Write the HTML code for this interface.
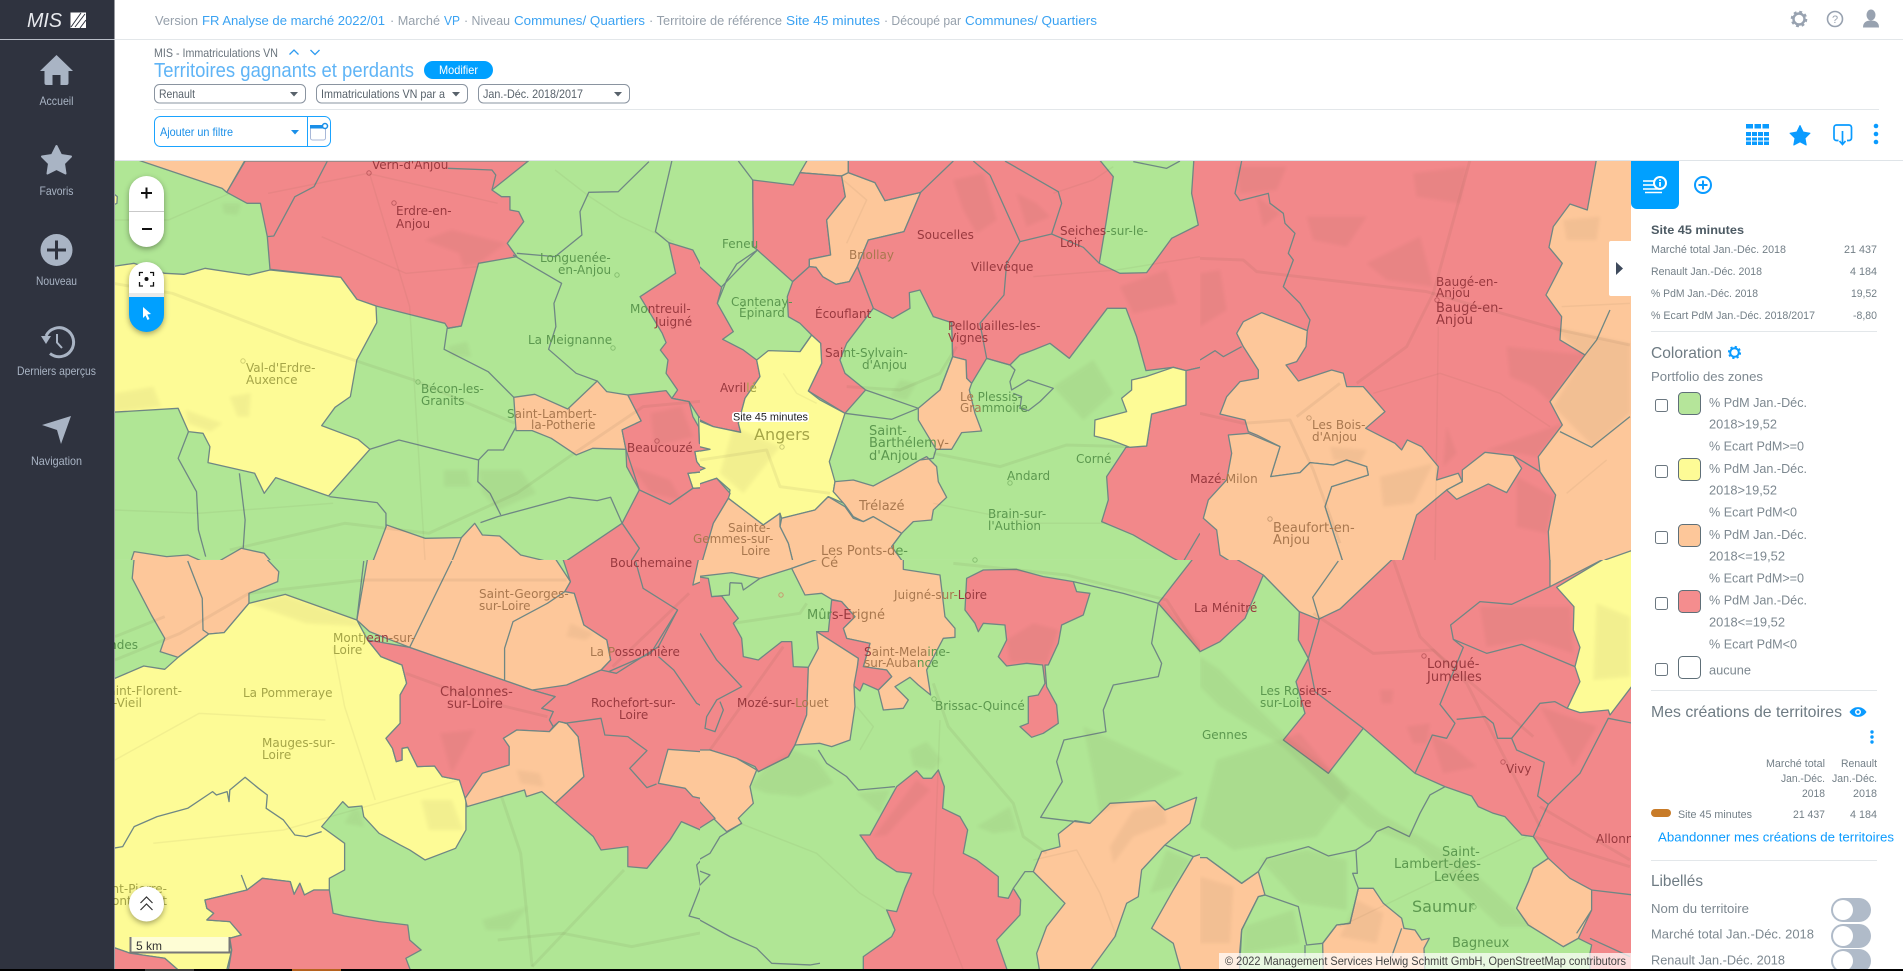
<!DOCTYPE html>
<html lang="fr"><head><meta charset="utf-8"><title>Territoires gagnants et perdants</title>
<style>
html,body{margin:0;padding:0;background:#fff;width:1903px;height:971px;overflow:hidden}
svg{display:block}
text{font-family:"Liberation Sans",sans-serif}
.m polygon,.m polyline{vector-effect:non-scaling-stroke;stroke-linejoin:round}
.r,.o,.y,.g,.l{stroke:#6f8784;stroke-width:1.3}
.r{fill:#f2888a}.o{fill:#fdc79a}.y{fill:#fdfb96}.g{fill:#b0e695}.l{fill:none}
.p{fill:#5a4a30;opacity:.06;stroke:none;filter:blur(5px)}
.w{fill:none;stroke:#5a4a30;opacity:.06;stroke-width:1.500}
.W{fill:none;stroke:#5a4a30;opacity:.07;stroke-width:3}
.lb text{font-family:"DejaVu Sans",sans-serif;font-size:12px}
.lb .b{font-size:13px}
.lr{fill:#99393f}.lg{fill:#5c984f}.lo{fill:#a9784f}.ly{fill:#a5a548}
.gy{fill:#96a0ab}.bl{fill:#3aa2f2}
.sn{fill:#a9b4c4;font-size:12px;text-anchor:middle}
.pt{fill:#737f87;font-size:11px}
.ph{fill:#6e7b83;font-size:16px}
.pl{fill:#7d8890;font-size:13px}
</style></head><body>
<svg xmlns="http://www.w3.org/2000/svg" width="1903" height="971" viewBox="0 0 1903 971">
<defs>
<clipPath id="ca"><rect x="115" y="161" width="585" height="399"/></clipPath>
<clipPath id="cb"><rect x="700" y="161" width="500" height="399"/></clipPath>
<clipPath id="cc"><rect x="115" y="560" width="585" height="409"/></clipPath>
<clipPath id="cd"><rect x="700" y="560" width="500" height="409"/></clipPath>
<clipPath id="ce"><rect x="1200" y="161" width="431" height="399"/></clipPath>
<clipPath id="cf"><rect x="1200" y="560" width="431" height="409"/></clipPath>
</defs>
<rect width="1903" height="971" fill="#fff"/>

<!-- MAP -->
<g class="m">
<!-- Tile A -->
<g clip-path="url(#ca)"><g transform="translate(115 160) scale(.3827 .3333)">
<rect class="g" style="stroke:none" width="1600" height="1200"/>
<polygon class="o" points="60,0 340,0 292,97 280,85"/>
<polygon class="r" points="340,3 292,97 345,130 380,130 398,230 405,328 590,352 632,418 682,438 862,490 870,505 905,498 950,310 1050,290 1025,250 1068,185 1055,155 1032,150 1032,110 1010,110 985,90 1080,3"/>
<polygon class="y" points="-10,320 50,310 130,340 180,343 235,325 350,345 405,330 590,352 632,418 682,438 684,488 632,600 615,710 575,742 540,797 635,838 666,868 558,1008 420,953 390,1000 365,940 243,908 248,860 230,820 192,815 165,745 -10,757"/>
<polygon class="o" points="1042,712 1097,703 1183,747 1260,663 1285,695 1340,705 1375,783 1325,810 1335,868 1248,865 1205,885 1140,835 1090,812 1048,812"/>
<polygon class="r" points="1447,248 1510,270 1535,325 1600,375 1600,830 1525,770 1500,725 1455,715 1470,690 1440,640 1445,600 1425,570 1440,548 1430,520 1372,410 1465,340"/>
<polygon class="y" points="1525,770 1600,820 1600,980 1510,985 1497,940 1540,935 1520,905 1515,875 1553,868 1527,850"/>
<polygon class="r" points="1340,705 1440,692 1455,715 1500,725 1510,770 1525,800 1527,850 1553,868 1515,875 1520,905 1540,935 1497,940 1510,985 1450,1033 1370,990 1337,920 1335,868 1325,810 1375,783"/>
<polygon class="r" points="1325,1090 1370,990 1450,1033 1510,985 1600,980 1600,1210 1345,1210 1370,1165"/>
<polygon class="r" points="1170,1210 1325,1090 1370,1165 1345,1210"/>
<polygon class="o" points="672,1210 710,1095 810,1135 905,1133 940,1090 960,1125 1005,1128 1060,1185 1150,1210"/>
<polygon class="o" points="50,1175 135,1190 190,1185 240,1210 40,1210"/>
<polygon class="o" points="262,1210 330,1165 390,1180 412,1210"/>
<polygon class="y" points="-5,100 6,110 5,130 -5,135"/>
<polyline class="l" points="905,1133 878,1210"/>
<polyline class="l" points="555,3 520,80 470,110 415,228 398,230"/>
<polyline class="l" points="870,25 985,30 995,45 985,90"/>
<polyline class="l" points="1040,285 1167,370 1147,430 1152,500 1133,568 1205,640 1260,663"/>
<polyline class="l" points="905,498 868,505 860,568 975,635 1042,712"/>
<polyline class="l" points="1050,280 1150,290 1220,225 1215,155 1238,97 1315,95 1395,5"/>
<polyline class="l" points="1455,3 1412,215 1447,248"/>
<polyline class="l" points="1048,800 1015,870 975,870 950,900 742,840 666,868"/>
<polyline class="l" points="950,900 948,965 980,1000 1008,1065"/>
<polyline class="l" points="560,1010 685,1028 708,1060 708,1100"/>
<polyline class="l" points="1325,1090 1295,1012 1260,1022 1187,1012 1000,1070 955,1088"/>
<polyline class="l" points="1335,868 1370,990"/>
<polyline class="l" points="192,815 165,895 213,995 218,1110 237,1190"/>
<polyline class="l" points="325,940 340,1080 335,1165"/>
<polyline class="W" points="-5,370 150,400 480,545 780,660 1045,790"/>
<polyline class="w" points="665,40 770,440 810,1200"/>
<polyline class="w" points="1150,30 1240,110 1320,170 1460,245"/>
<polyline class="W" points="1568,720 1380,740 1200,880 1050,1000 820,1120 600,1090 300,1170"/>
<polyline class="w" points="400,100 660,40 1000,130"/>
<polyline class="w" points="540,230 760,340 950,320"/>
<polyline class="w" points="0,180 140,180 300,100"/>
<polyline class="w" points="0,1050 220,1060 570,1030"/>
<polygon class="p" points="810,240 880,210 1020,250 950,310 910,320 900,280"/>
<polygon class="p" points="950,930 1060,930 1100,1000 1000,1050 960,1000"/>
<polygon class="p" points="185,750 280,790 250,815 190,790"/>
<polygon class="p" points="300,710 355,700 350,770 320,770"/>
<polygon class="p" points="0,700 100,680 120,740 0,757"/>
<polygon class="p" points="280,130 330,130 320,165 285,160"/>
<polygon class="p" points="870,560 920,545 930,590 880,590"/>
<polygon class="p" points="1400,760 1480,740 1510,830 1410,860"/>
<polygon class="p" points="1350,920 1450,960 1480,1020 1400,1000"/>
<polygon class="p" points="860,930 920,930 930,980 860,980"/>
</g></g>
<!-- Tile B -->
<g clip-path="url(#cb)"><g transform="translate(700 160)  scale(.3333)">
<rect class="g" style="stroke:none" width="1510" height="1200"/>
<polygon class="r" points="-10,312 65,382 52,430 100,515 68,538 130,570 170,600 180,650 135,715 115,790 122,817 40,800 -10,775"/>
<polygon class="o" points="325,-5 300,38 425,48 445,38 445,-5"/>
<polygon class="r" points="158,60 280,75 300,38 425,48 436,110 380,180 392,285 328,298 328,320 278,365 172,270 160,260"/>
<polygon class="o" points="425,48 445,38 525,68 555,122 662,97 612,215 505,240 472,320 448,365 408,373 368,350 348,322 328,320 328,298 392,285 380,180 436,110"/>
<polygon class="r" points="445,-5 1195,-5 1240,50 1218,190 1198,310 1260,340 1340,338 1415,235 1495,195 1475,100 1482,-5 1510,-5 1510,620 1458,632 1420,622 1338,632 1310,530 1278,445 1222,445 1108,595 1050,550 1000,570 960,585 930,615 860,595 815,670 800,655 798,600 758,590 755,488 700,470 660,390 628,398 630,445 578,475 520,445 472,320 505,240 612,215 662,97 555,122 525,68 445,38"/>
<polygon class="r" points="1510,620 1458,632 1458,735 1355,762 1340,858 1278,862 1220,950 1225,1020 1205,1085 1300,1125 1420,1195 1450,1210 1510,1210"/>
<polyline class="l" points="1450,1205 1500,1120"/>
<polygon class="y" points="1295,660 1338,650 1420,622 1458,632 1458,735 1355,762 1340,858 1290,862 1232,840 1183,828 1185,780 1280,755 1265,715 1295,690"/>
<polygon class="r" points="278,365 328,320 348,322 368,350 408,373 448,365 472,320 520,445 440,550 420,600 435,640 497,690 435,760 325,693 365,610 362,550 335,525 300,490 265,470 262,410"/>
<polygon class="y" points="335,525 362,550 365,610 325,693 360,720 435,760 388,905 405,965 400,995 432,1030 385,1010 345,1050 245,1075 240,1060 190,1095 85,1015 90,990 50,955 20,965 -10,975 -10,780 40,800 122,817 115,790 135,715 180,650 170,600 205,572 300,575"/>
<polygon class="r" points="-10,858 30,868 -10,875"/>
<polygon class="r" points="-10,915 15,925 -10,935"/>
<polygon class="r" points="-10,975 50,955 90,1000 85,1015 40,1090 10,1210 -10,1210"/>
<polygon class="o" points="758,590 798,600 800,655 815,670 808,690 825,760 845,813 785,818 755,868 708,868 655,780 655,745 720,690"/>
<polygon class="o" points="400,995 405,965 460,960 520,978 600,935 660,900 680,890 710,920 715,965 740,1012 700,1050 695,1080 640,1085 605,1120 520,1070 490,1085 460,1070 435,1035"/>
<polygon class="o" points="240,1100 245,1075 345,1050 385,1010 435,1040 460,1075 490,1085 520,1070 605,1120 575,1160 612,1210 280,1210 265,1150"/>
<polygon class="o" points="85,1015 190,1095 240,1060 240,1100 265,1150 280,1210 5,1210 40,1090"/>
<polyline class="l" points="115,3 158,60 160,260 172,270 65,380"/>
<polyline class="l" points="172,270 110,312 80,360 52,430"/>
<polyline class="l" points="335,525 300,575"/>
<polyline class="l" points="435,760 575,778 655,745"/>
<polyline class="l" points="720,690 758,590 755,488"/>
<polyline class="l" points="497,690 655,745"/>
<polyline class="l" points="870,45 960,245 1055,222 1085,130 1075,95 915,3"/>
<polyline class="l" points="820,3 870,45"/>
<polyline class="l" points="760,3 662,97"/>
<polyline class="l" points="960,245 920,310 912,405 840,490 860,595"/>
<polyline class="l" points="1055,222 1150,262 1198,310"/>
<polyline class="l" points="860,595 930,615 945,630 930,665 935,690 985,660 1060,685 1020,725 985,752 960,745 965,710 940,700"/>
<polyline class="l" points="1300,5 1400,25 1440,3"/>
<polyline class="l" points="708,868 700,895 660,900"/>
<polyline class="l" points="605,1120 575,1160"/>
<polyline class="W" points="700,880 900,920 1100,855 1280,860"/>
<polyline class="W" points="440,680 600,690 720,640 770,560"/>
<polyline class="W" points="0,900 200,870 240,980 390,1000"/>
<polyline class="w" points="250,640 290,700 350,730"/>
<polyline class="w" points="1060,100 1180,60 1240,20"/>
<polyline class="w" points="1000,350 1250,330 1500,290"/>
<polyline class="w" points="700,1030 1000,1090 1220,1090"/>
<polyline class="w" points="440,250 500,120 430,60"/>
<polygon class="p" points="760,60 850,40 890,180 830,220 790,150"/>
<polygon class="p" points="1060,680 1180,600 1240,700 1150,780"/>
<polygon class="p" points="950,100 1010,130 1050,170 980,200"/>
<polygon class="p" points="1260,380 1400,330 1430,430 1300,460"/>
<polygon class="p" points="100,800 240,860 130,1000 60,940"/>
<polygon class="p" points="600,660 650,670 620,720 570,710"/>
</g></g>
<!-- Tile C -->
<g clip-path="url(#cc)"><g transform="translate(115 560) scale(.3827 .3333)">
<rect class="g" style="stroke:none" width="1600" height="1240"/>
<polygon class="r" points="1170,-5 1190,65 1175,95 1200,100 1225,195 1285,240 1295,300 1270,330 1090,390 1120,400 1150,410 1115,445 1145,455 1135,480 1145,500 1160,485 1180,490 1210,530 1225,650 1150,730 1250,830 1270,870 1340,860 1340,920 1390,925 1450,840 1480,785 1530,810 1600,760 1600,-5"/>
<polygon class="o" points="1420,670 1445,568 1530,575 1600,565 1600,770 1550,720 1510,710 1490,685"/>
<polygon class="o" points="1510,75 1600,35 1600,-5 1525,-5"/>
<polygon class="o" points="50,-5 45,55 95,165 130,235 118,275 165,292 245,222 285,218 350,130 350,100 425,65 428,35 395,-5"/>
<polygon class="y" points="-10,360 75,318 130,328 165,292 245,222 285,218 350,130 445,103 632,180 660,240 695,290 750,315 762,370 745,405 745,490 708,535 725,565 735,605 750,600 750,565 765,562 790,620 835,618 855,650 900,660 917,715 917,810 890,865 810,900 770,870 745,855 690,820 650,770 645,738 610,742 595,725 540,800 600,850 600,930 560,955 560,990 520,990 495,1005 483,970 468,1003 458,965 385,955 345,990 235,1020 240,1045 258,1060 240,1080 300,1085 330,1125 300,1135 305,1170 290,1240 175,1240 130,1195 40,1180 -10,1160"/>
<polygon class="r" points="660,240 770,262 1090,390 1120,400 1150,410 1115,445 1145,455 1135,480 1145,500 1135,515 1050,510 1015,535 1030,560 1030,615 960,640 915,715 900,660 855,650 835,618 790,620 765,562 750,565 750,600 735,605 725,565 708,535 745,490 745,405 762,370 750,315 695,290"/>
<polygon class="o" points="660,-5 632,180 665,215 770,262 1090,390 1180,375 1270,330 1295,300 1285,240 1225,195 1200,100 1175,95 1190,65 1150,-5"/>
<polygon class="o" points="1015,535 1050,510 1135,515 1160,485 1180,490 1210,530 1225,650 1150,730 1115,695 1075,710 1070,690 1010,710 920,740 915,715 960,640 1030,615 1030,560"/>
<polygon class="r" points="235,1020 345,990 385,955 458,965 468,1003 483,970 495,1005 520,990 560,990 570,1060 600,1068 690,1085 765,1095 770,1140 800,1170 760,1195 775,1240 295,1240 305,1170 300,1135 330,1125 300,1085 240,1080 258,1060 240,1045"/>
<polygon class="r" points="-10,1160 40,1180 130,1195 175,1240 -10,1240"/>
<polyline class="l" points="190,3 228,115 230,210 245,222"/>
<polyline class="l" points="880,3 770,262"/>
<polyline class="l" points="1175,95 1130,130 1040,185 1018,265 1018,360"/>
<polyline class="l" points="1360,3 1380,85 1470,150 1420,260 1310,340 1270,330"/>
<polyline class="l" points="1470,150 1400,280 1290,335"/>
<polyline class="l" points="1420,290 1460,330 1520,430 1600,480"/>
<polyline class="l" points="1175,490 1270,475 1280,525 1340,530 1390,572 1345,625 1390,683 1415,672"/>
<polyline class="l" points="1600,815 1520,915 1530,980 1500,1068 1600,1100"/>
<polyline class="l" points="-5,865 20,860 50,800 110,770 190,745 255,695 265,705 293,695 298,725 300,690 340,652 375,685 398,705 395,745 440,780 470,825 500,830 540,815"/>
<polyline class="l" points="330,945 345,990"/>
<polyline class="l" points="650,3 632,180"/>
<polyline class="W" points="0,300 170,220 350,100 650,60 1180,60"/>
<polyline class="W" points="0,230 130,170"/>
<polyline class="W" points="760,340 950,420 1130,470"/>
<polyline class="W" points="1300,320 1500,100"/>
<polyline class="W" points="1000,1140 1170,1120 1350,1160 1568,1110"/>
<polyline class="W" points="1010,710 1060,880 1090,1220"/>
<polyline class="W" points="1090,1220 1330,930"/>
<polyline class="w" points="570,260 600,440 680,720"/>
<polyline class="w" points="100,850 440,810 900,660"/>
<polyline class="w" points="0,600 220,460 550,480"/>
<polygon class="p" points="350,130 445,105 620,175 650,200 500,190 400,150"/>
<polygon class="p" points="850,520 940,510 880,640"/>
<polygon class="p" points="1190,190 1250,220 1230,240 1180,230"/>
<polygon class="p" points="960,1080 1080,1040 1030,1110 970,1110"/>
<polygon class="p" points="800,720 880,720 910,810 820,810"/>
<polygon class="p" points="620,750 640,750 650,800 600,790"/>
<polygon class="p" points="1050,630 1110,640 1120,680 1060,670"/>
</g></g>
<!-- Tile D -->
<g clip-path="url(#cd)"><g transform="translate(700 560) scale(.3333)">
<rect class="g" style="stroke:none" width="1510" height="1240"/>
<polygon class="o" points="-10,50 95,38 180,55 275,25 360,-5 -10,-5"/>
<polygon class="r" points="-10,50 25,55 35,110 65,108 115,175 100,190 125,235 130,290 175,300 200,280 245,245 275,245 280,320 325,322 320,465 285,555 265,590 175,635 165,620 110,595 30,570 -10,575"/>
<polygon class="o" points="275,25 360,-5 610,-5 610,28 720,45 735,170 765,205 765,232 730,235 680,330 692,405 655,375 630,352 585,380 625,420 610,445 550,450 535,390 575,350 560,330 490,320 510,250 440,235 430,205 465,170 425,125 395,118 365,100 315,105"/>
<polygon class="r" points="395,120 425,125 465,170 430,205 440,235 510,250 490,320 560,330 575,350 535,390 490,370 480,393 458,375 472,320 475,295 350,215 385,215"/>
<polygon class="o" points="350,215 475,295 472,320 462,375 465,440 450,540 395,560 360,550 285,555 320,465 325,322 355,265"/>
<polygon class="r" points="800,55 850,30 950,28 1030,50 1120,65 1130,95 1170,100 1150,165 1085,195 1075,250 1045,315 1035,315 1040,380 1070,435 1075,490 1030,520 995,532 960,500 985,490 985,410 1015,405 1035,370 1028,315 980,310 920,318 895,290 920,240 915,195 850,190 835,215 825,190 795,150"/>
<polygon class="o" points="-10,570 30,570 110,595 170,630 150,680 160,730 115,775 125,790 80,815 45,780 -10,715"/>
<polygon class="r" points="-10,715 45,775 -10,810"/>
<polygon class="r" points="480,825 510,825 590,680 650,632 670,655 695,655 715,630 733,680 728,745 780,770 803,810 790,880 830,900 895,950 895,1010 925,1015 940,985 962,1020 960,1065 890,1140 925,1240 490,1240 490,1190 575,1130 585,1110 560,1050 590,1055 615,985 635,940 590,935 530,895"/>
<polygon class="r" points="1375,130 1480,-5 1510,-5 1510,285"/>
<polygon class="o" points="1125,782 1170,790 1230,730 1365,722 1395,750 1490,712 1470,790 1395,855 1325,930 1315,1010 1280,1030 1245,1130 1165,1240 1020,1240 1010,1180 1040,1100 1095,1030 1000,935 1025,875 1080,860 1075,822"/>
<polygon class="o" points="1510,880 1480,890 1420,990 1355,1105 1420,1150 1445,1240 1510,1240"/>
<polygon class="g" points="-10,930 30,945 -10,985"/>
<polyline class="l" points="90,68 125,70 130,90 180,55"/>
<polyline class="l" points="90,68 88,105 35,110"/>
<polyline class="l" points="355,570 380,610 440,650 475,690 585,680"/>
<polyline class="l" points="-10,1075 90,1130 170,1165 215,1210 330,1215 360,1210"/>
<polyline class="l" points="1120,65 1270,100 1375,130 1355,250 1385,310 1375,350 1240,375 1210,450 1218,515 1092,540 1070,605 1087,665 1022,772 1170,790"/>
<polyline class="l" points="1000,935 975,935 940,985"/>
<polyline class="l" points="1395,855 1480,890"/>
<polyline class="l" points="125,790 60,830 30,880 -5,900"/>
<polyline class="l" points="0,220 50,300 125,380 50,420 20,470 15,505 45,515 70,450 60,425"/>
<polyline class="l" points="175,635 265,590 285,555"/>
<polyline class="W" points="700,370 745,500 940,730 970,830 1040,880"/>
<polyline class="W" points="30,570 250,260"/>
<polyline class="W" points="760,10 1100,45 1400,120 1510,290"/>
<polyline class="W" points="100,190 300,160 320,130"/>
<polyline class="w" points="720,480 700,1000 790,1230"/>
<polyline class="w" points="120,790 350,880 480,1000 560,1050"/>
<polyline class="w" points="1000,900 1130,870 1200,1000 1250,1130"/>
<polyline class="w" points="470,440 520,500 480,570"/>
<polygon class="p" points="150,680 200,620 280,570 350,600 400,670 300,710 200,700"/>
<polygon class="p" points="630,570 680,545 725,600 700,630 640,620"/>
<polygon class="p" points="1150,500 1450,640 1200,760 1180,650"/>
<polygon class="p" points="920,240 1000,190 1075,210 1040,310 930,305"/>
<polygon class="p" points="520,830 590,740 650,660 690,690 610,770 560,825"/>
<polygon class="p" points="1385,125 1510,260 1510,285 1375,135"/>
<polygon class="p" points="1300,750 1390,730 1400,790 1300,830 1240,910 1230,860"/>
<polygon class="p" points="1400,870 1470,900 1420,980 1350,1000"/>
<polygon class="p" points="470,700 570,690 540,760"/>
<polygon class="p" points="830,800 930,740 950,810 880,820"/>
</g></g>
<!-- Tile E -->
<g clip-path="url(#ce)"><g transform="translate(1200 160) scale(.3333)">
<rect class="r" style="stroke:none" width="1310" height="1210"/>
<polygon class="o" points="1190,-5 1162,150 1110,132 1060,200 1047,262 1087,310 1038,405 1085,470 1080,540 1155,585 1050,725 1087,795 1015,890 1020,935 1067,1005 1045,1115 1050,1210 1310,1210 1310,-5"/>
<polygon class="o" points="185,458 322,512 318,560 290,605 258,615 295,663 395,630 430,640 440,680 490,680 555,755 497,805 585,850 605,870 622,840 665,860 715,920 710,960 775,940 787,965 740,990 650,1065 605,1210 430,1210 375,1040 395,980 505,945 500,920 440,900 400,915 330,908 300,938 212,950 240,860 170,825 145,815 135,780 60,762 80,710 120,665 175,655 175,630 130,560 110,520 130,485"/>
<polygon class="o" points="85,825 145,820 240,860 212,950 300,938 330,908 400,915 440,900 500,920 505,945 395,980 375,1040 430,1210 100,1210 60,1185 50,1110 10,1075 25,1020 80,960 95,880"/>
<polygon class="o" points="787,930 855,877 940,887 965,925 920,998 865,972 770,1018 740,990 787,965"/>
<polygon class="y" points="1215,1200 1300,1170 1300,1210 1215,1210"/>
<polyline class="l" points="125,3 105,100 120,122 205,100 210,130 250,160 255,190 285,220 265,280 280,300 250,380 300,430 330,480 322,512"/>
<polyline class="l" points="0,600 45,572 70,590 125,560"/>
<polyline class="l" points="1020,935 940,887"/>
<polyline class="l" points="1290,770 1175,862 1080,815"/>
<polyline class="l" points="1155,585 1190,540 1230,450"/>
<polyline class="W" points="0,295 130,300 170,335 680,395 1080,510 1290,555"/>
<polyline class="w" points="715,500 705,1200"/>
<polyline class="W" points="810,0 700,400"/>
<polyline class="W" points="700,400 620,560 470,670"/>
<polyline class="W" points="0,760 130,790 270,780 340,930 420,1150"/>
<polyline class="W" points="290,770 420,670"/>
<polyline class="w" points="1085,440 1290,430"/>
<polyline class="w" points="520,700 720,640 900,700 1050,800"/>
<polyline class="w" points="1220,900 1100,1000"/>
<polygon class="p" points="320,170 500,170 440,260 340,240"/>
<polygon class="p" points="640,40 800,20 780,130 650,110"/>
<polygon class="p" points="500,310 660,230 700,380 560,360"/>
<polygon class="p" points="920,560 1150,585 1050,725 1000,680 930,650"/>
<polygon class="p" points="860,870 1090,790 1010,890 950,880"/>
<polygon class="p" points="740,800 770,880 730,920"/>
<polygon class="p" points="110,20 260,20 230,90 120,100"/>
<polygon class="p" points="0,340 60,330 80,450 0,500"/>
<polygon class="p" points="170,110 240,160 190,200"/>
<polygon class="p" points="1060,500 1290,550 1290,760 1180,860 1060,740 1150,590"/>
<polygon class="p" points="1090,180 1200,170 1190,240 1100,240"/>
<polygon class="p" points="390,860 500,870 480,910 400,900"/>
<polygon class="p" points="540,950 700,910 640,1030 550,1040"/>
<polygon class="p" points="950,950 1060,1010 1040,1120 950,1100"/>
</g></g>
<!-- Tile F -->
<g clip-path="url(#cf)"><g transform="translate(1200 560) scale(.3333)">
<rect class="r" style="stroke:none" width="1310" height="1240"/>
<polygon class="g" points="-10,280 60,245 135,175 190,45 298,155 295,240 325,295 288,365 315,460 250,540 385,640 490,505 645,640 735,680 815,708 835,740 880,760 915,770 965,825 1000,830 1045,895 1000,925 985,965 950,1045 985,1095 1090,1160 1135,1135 1175,1155 1170,1180 1170,1240 -10,1240"/>
<polygon class="o" points="-10,893 20,893 125,970 175,935 195,1005 175,1010 125,1110 118,1240 -10,1240"/>
<polygon class="o" points="368,1150 410,1095 450,1090 475,985 520,985 550,1030 605,1075 612,1105 645,1110 665,1140 688,1135 672,1165 675,1240 370,1240"/>
<polygon class="o" points="1045,895 1000,925 985,965 950,1045 985,1095 1090,1160 1135,1135 1175,1050 1175,990 1110,955"/>
<polygon class="o" points="105,-5 190,45 298,155 355,178 420,147 580,-5"/>
<polygon class="o" points="1050,-5 1050,80 1215,-5"/>
<polygon class="y" points="1070,82 1215,-5 1310,-5 1310,360 1230,465 1225,450 1140,458 1102,445 1140,365 1125,320 1140,262 1120,210 1122,140"/>
<polyline class="l" points="415,3 338,112 358,178"/>
<polyline class="l" points="1050,80 935,133 840,125 752,195 760,238 860,280 965,253 1125,320"/>
<polyline class="l" points="760,238 790,262 720,433 765,490 740,535 697,525 645,640"/>
<polyline class="l" points="770,478 855,470 880,490 893,535 935,535 1020,430 1065,425 1102,445"/>
<polyline class="l" points="935,535 950,570 1033,607 1013,708 1045,733 1140,640 1225,475 1300,490"/>
<polyline class="l" points="1045,733 1000,830"/>
<polyline class="l" points="1175,990 1300,1005"/>
<polyline class="l" points="358,178 325,295 345,395 490,505"/>
<polyline class="l" points="735,680 690,705 660,760 628,830 565,800 530,815 510,843 468,870 385,888 325,860 200,895 175,935 125,970 20,893"/>
<polyline class="l" points="468,870 472,940 458,940 475,985 450,1090 410,1095 368,1150 320,1155 295,1040 195,1005"/>
<polyline class="l" points="195,1005 175,1010 125,1110 118,1190"/>
<polyline class="l" points="315,1155 315,1190"/>
<polyline class="l" points="605,1105 575,1190"/>
<polyline class="l" points="1170,1135 1290,1190"/>
<polyline class="l" points="1175,1050 1130,1120"/>
<polygon class="p" points="0,290 60,330 250,520 400,640 540,760 780,900 1000,1100 900,1100 650,860 500,800 250,560 60,440 0,380"/>
<polygon class="p" points="50,600 300,520 450,700 350,830 100,870 0,800"/>
<polygon class="p" points="180,900 320,870 440,900 440,1050 300,1030"/>
<polygon class="p" points="130,1100 280,1050 300,1150 130,1180"/>
<polygon class="p" points="0,950 100,980 90,1150 0,1150"/>
<polygon class="p" points="470,1020 550,1060 530,1150 420,1130"/>
<polygon class="p" points="690,520 760,560 830,620 730,640"/>
<polygon class="p" points="1020,440 1190,500 1120,620 1100,580"/>
<polygon class="p" points="840,140 1110,140 1120,280 1000,240 860,260"/>
<polygon class="p" points="620,500 690,490 680,550 640,550"/>
<polygon class="p" points="1190,130 1290,170 1290,350 1180,360"/>
<polygon class="p" points="540,390 580,390 575,430 545,430"/>
<polyline class="W" points="580,0 660,230 800,370 1020,800"/>
<polyline class="W" points="340,160 520,280 700,270 1000,530"/>
<polyline class="W" points="1020,740 1290,900"/>
<polyline class="W" points="1000,830 1290,920"/>
<polyline class="w" points="420,1100 980,830"/>
</g></g>
<!-- Town dots -->
<g fill="none" stroke-width="1">
<circle cx="369" cy="173" r="2.2" stroke="#c05c60"/><circle cx="394" cy="203" r="2.2" stroke="#c05c60"/>
<circle cx="617" cy="275" r="2.2" stroke="#86bf70"/><circle cx="613" cy="348" r="2.2" stroke="#86bf70"/>
<circle cx="243" cy="361" r="2.2" stroke="#d0cf70"/><circle cx="418" cy="382" r="2.2" stroke="#86bf70"/>
<circle cx="657" cy="441" r="2.2" stroke="#c05c60"/><circle cx="782" cy="447" r="2.2" stroke="#c8c870"/>
<circle cx="1437" cy="300" r="2.2" stroke="#c05c60"/><circle cx="1309" cy="418" r="2.2" stroke="#c89a70"/>
<circle cx="1270" cy="519" r="2.2" stroke="#c89a70"/><circle cx="1424" cy="656" r="2.2" stroke="#c05c60"/>
<circle cx="1503" cy="762" r="2.2" stroke="#c05c60"/><circle cx="1474" cy="907" r="2.2" stroke="#86bf70"/>
<circle cx="934" cy="699" r="2.2" stroke="#86bf70"/><circle cx="781" cy="595" r="2.2" stroke="#c89a70"/>
<circle cx="975" cy="560" r="2.2" stroke="#86bf70"/><circle cx="1010" cy="483" r="2.2" stroke="#86bf70"/>
</g>
<!-- Map labels -->
<g class="lb">
<text class="lr" x="372" y="169">Vern-d'Anjou</text>
<text class="lr" x="396" y="215">Erdre-en-</text><text class="lr" x="396" y="228">Anjou</text>
<text class="lg" x="540" y="262">Longuenée-</text><text class="lg" x="558" y="274">en-Anjou</text>
<text class="lr" x="630" y="313"><tspan class="lg">Mo</tspan>ntreuil-</text><text class="lr" x="655" y="326">Juigné</text>
<text class="lg" x="528" y="344">La Meignanne</text>
<text class="ly" x="246" y="372">Val-d'Erdre-</text><text class="ly" x="246" y="384">Auxence</text>
<text class="lg" x="421" y="393">Bécon-les-</text><text class="lg" x="421" y="405">Granits</text>
<text class="lo" x="507" y="418"><tspan class="lg">S</tspan>aint-Lambert-</text><text class="lo" x="531" y="429">la-Potherie</text>
<text class="lr" x="627" y="452">Beaucouzé</text>
<text class="lg" x="722" y="248">Feneu</text>
<text class="lo" x="849" y="259">Briollay</text>
<text class="lr" x="917" y="239">Soucelles</text>
<text class="lr" x="971" y="271">Villevêque</text>
<text class="lr" x="1060" y="235">Seiches<tspan class="lg">-sur-le-</tspan></text><text class="lr" x="1060" y="247">Loir</text>
<text class="lg" x="731" y="306">Cantenay-</text><text class="lg" x="739" y="317">Épinard</text>
<text class="lr" x="815" y="318">Écouflant</text>
<text class="lr" x="948" y="330">Pellouailles-les-</text><text class="lr" x="948" y="342">Vignes</text>
<text class="lg" x="825" y="357"><tspan class="lr">Sai</tspan>nt-Sylvain-</text><text class="lg" x="862" y="369">d'Anjou</text>
<text class="lr" x="720" y="392">Avril<tspan class="ly">lé</tspan></text>
<text class="lg" x="960" y="401"><tspan class="lo">Le </tspan>Plessis-</text><text class="lg" x="960" y="412"><tspan class="lo">Gra</tspan>mmoire</text>
<text class="ly" x="754" y="440" style="font-size:16px">Angers</text>
<text class="lg b" x="869" y="435">Saint-</text><text class="lg b" x="869" y="447">Barthélem<tspan class="lo">y-</tspan></text><text class="lg b" x="869" y="460">d'Anjou</text>
<text class="lg" x="1076" y="463">Corné</text>
<text class="lg" x="1007" y="480">Andard</text>
<text class="lo b" x="859" y="510">Trélazé</text>
<text class="lg" x="988" y="518">Brain-sur-</text><text class="lg" x="988" y="530">l'Authion</text>
<text class="lo" x="728" y="532">Sainte-</text><text class="lo" x="693" y="543">Gemmes-sur-</text><text class="lo" x="741" y="555">Loire</text>
<text class="lo b" x="821" y="555">Les Ponts-d<tspan class="lg">e-</tspan></text><text class="lo b" x="821" y="567">Cé</text>
<text class="lo" x="894" y="599">Juigné-sur-<tspan class="lr">Loire</tspan></text>
<text class="lg b" x="807" y="619">Mûr<tspan class="lr">s-E</tspan><tspan class="lo">rigné</tspan></text>
<text class="lo" x="864" y="656"><tspan class="lr">S</tspan>aint-Mela<tspan class="lg">ine-</tspan></text><text class="lo" x="864" y="667">sur-Auba<tspan class="lg">nce</tspan></text>
<text class="lr" x="737" y="707">Mozé-sur-<tspan class="lo">Louet</tspan></text>
<text class="lg" x="935" y="710">Brissac-Quincé</text>
<text class="lo" x="479" y="598">Saint-Georges-</text><text class="lo" x="479" y="610">sur-Loire</text>
<text class="lr" x="610" y="567">Bouchemaine</text>
<text class="ly" x="333" y="642">Montj<tspan class="lr">ean</tspan><tspan class="lo">-sur-</tspan></text><text class="ly" x="333" y="654">Loire</text>
<text class="lr" x="590" y="656"><tspan class="lo">La P</tspan>ossonnière</text>
<text class="lr b" x="440" y="696">Chalonnes-</text><text class="lr b" x="447" y="708">sur-Loire</text>
<text class="lr" x="591" y="707">Rochefort-sur-</text><text class="lr" x="619" y="719">Loire</text>
<text class="ly" x="243" y="697">La Pommeraye</text>
<text class="ly" x="182" y="695" text-anchor="end">Saint-Florent-</text><text class="ly" x="142" y="707" text-anchor="end">le-Vieil</text>
<text class="ly" x="262" y="747">Mauges-sur-</text><text class="ly" x="262" y="759">Loire</text>
<text class="ly" x="167" y="893" text-anchor="end">Saint-Pierre-</text><text class="ly" x="167" y="905" text-anchor="end">Montlimart</text>
<text class="lg" x="138" y="649" text-anchor="end">Ingrandes</text>
<text class="lr" x="1436" y="286">Baugé-en-</text><text class="lr" x="1436" y="297">Anjou</text>
<text class="lr b" x="1436" y="312">Baugé-en-</text><text class="lr b" x="1436" y="324">Anjou</text>
<text class="lo" x="1312" y="429">Les Bois-</text><text class="lo" x="1312" y="441">d'Anjou</text>
<text class="lr" x="1190" y="483">Mazé<tspan class="lo">-Milon</tspan></text>
<text class="lo b" x="1273" y="532">Beaufort-en-</text><text class="lo b" x="1273" y="544">Anjou</text>
<text class="lr" x="1194" y="612">La Ménitré</text>
<text class="lg" x="1260" y="695">Les Ro<tspan class="lr">siers-</tspan></text><text class="lg" x="1260" y="707">sur-Loi<tspan class="lr">re</tspan></text>
<text class="lg" x="1202" y="739">Gennes</text>
<text class="lr b" x="1427" y="668">Longué-</text><text class="lr b" x="1427" y="681">Jumelles</text>
<text class="lr" x="1506" y="773">Vivy</text>
<text class="lr" x="1596" y="843">Allonnes</text>
<text class="lg b" x="1442" y="856">Saint-</text><text class="lg b" x="1394" y="868">Lambert-des-</text><text class="lg b" x="1434" y="881">Levées</text>
<text class="lg" x="1412" y="912" style="font-size:16px">Saumur</text>
<text class="lg b" x="1452" y="947">Bagneux</text>
</g>
<rect x="732" y="412" width="77" height="10" rx="3" fill="#fff"/>
<text x="733" y="420.5" font-size="11" fill="#222" textLength="75" lengthAdjust="spacingAndGlyphs">Site 45 minutes</text>
<!-- attribution -->
<rect x="1219" y="953" width="412" height="16" fill="#fff" opacity=".72"/>
<text x="1225" y="965" font-size="12" fill="#444" textLength="401" lengthAdjust="spacingAndGlyphs">© 2022 Management Services Helwig Schmitt GmbH, OpenStreetMap contributors</text>
<!-- scale -->
<rect x="130" y="937" width="100" height="16" fill="#fff" opacity=".6"/>
<path d="M130.500 937V952.500H229.500V937" fill="none" stroke="#777" stroke-width="2"/>
<text x="136" y="950" font-size="12" fill="#333">5 km</text>
</g>

<!-- map controls -->
<g style="filter:drop-shadow(0 2px 3px rgba(0,0,0,.35))">
<rect x="129" y="176" width="35" height="71" rx="17.500" fill="#fff"/>
<path d="M129 297V279.500a17.500 17.500 0 0 1 35 0V297Z" fill="#fff"/>
<path d="M129 297H164V314.500a17.500 17.500 0 0 1-35 0Z" fill="#00a0ff"/>
<circle cx="146.500" cy="904" r="17.500" fill="#fff"/>
</g>
<rect x="129" y="211" width="35" height="1" fill="#c9c9c9"/>
<rect x="129" y="293" width="35" height="4" fill="#e9e9e9"/>
<path d="M141 193H152M146.500 187.500V198.500" stroke="#111" stroke-width="2"/>
<path d="M142 229H152" stroke="#111" stroke-width="2"/>
<path d="M139.500 276V272.500H143M150 272.500H153.500V276M153.500 282V286H150M143 286H139.500V282" fill="none" stroke="#111" stroke-width="1.300"/>
<circle cx="146.500" cy="279" r="2" fill="#111"/>
<path d="M143 307L151 314L147.300 314.500L149.500 319L147.500 320L145.500 315.500L143 318Z" fill="#fff"/>
<path d="M140.500 903L146.500 897L152.500 903M140.500 910L146.500 904L152.500 910" fill="none" stroke="#333" stroke-width="1.200"/>

<!-- collapse handle -->
<rect x="1609" y="241" width="24" height="55" rx="2" fill="#fff"/>
<path d="M1616 262L1623 268.500L1616 275Z" fill="#3e4a5c"/>

<!-- sidebar -->
<rect width="114.500" height="971" fill="#2f333f"/>
<rect y="39" width="114.500" height="1" fill="#b8bdc6"/>
<text x="27" y="27" font-size="20" font-style="italic" fill="#e8eaee" textLength="35" lengthAdjust="spacingAndGlyphs">MIS</text>
<rect x="70.500" y="12.500" width="15.500" height="15.500" fill="#fff"/>
<path d="M71 27L81 13M75 27L85 14M80 28L86 20" stroke="#2f333f" stroke-width="1"/>
<path d="M56.500 55L73 71H68.500V83a2 2 0 0 1-2 2H60.500V75H52.500V85H46.500a2 2 0 0 1-2-2V71H40Z" fill="#a9b4c4"/>
<polygon points="56.500,146 61,155 71,156.500 64,163.500 65.500,173.500 56.500,169 47.500,173.500 49,163.500 42,156.500 52,155" fill="#a9b4c4" stroke="#a9b4c4" stroke-width="2" stroke-linejoin="round"/>
<circle cx="56.500" cy="250" r="16" fill="#a9b4c4"/>
<path d="M47 250H66M56.500 240.500V259.500" stroke="#2f333f" stroke-width="3"/>
<path d="M46 336A14.500 14.500 0 1 1 50 353.500" fill="none" stroke="#a9b4c4" stroke-width="3"/>
<path d="M41 336H51L46 344Z" fill="#a9b4c4"/>
<path d="M57 334V342.500L62 348" fill="none" stroke="#a9b4c4" stroke-width="2"/>
<polygon points="71,416 42,425 57,430 61,444" fill="#a9b4c4"/>
<text class="sn" x="56.500" y="105" textLength="34" lengthAdjust="spacingAndGlyphs">Accueil</text>
<text class="sn" x="56.500" y="195" textLength="34" lengthAdjust="spacingAndGlyphs">Favoris</text>
<text class="sn" x="56.500" y="285" textLength="41" lengthAdjust="spacingAndGlyphs">Nouveau</text>
<text class="sn" x="56.500" y="375" textLength="79" lengthAdjust="spacingAndGlyphs">Derniers aperçus</text>
<text class="sn" x="56.500" y="465" textLength="51" lengthAdjust="spacingAndGlyphs">Navigation</text>

<!-- header -->
<rect x="114.500" y="0" width="1788.500" height="160" fill="#fff"/>
<rect x="114.500" y="39" width="1788.500" height="1" fill="#e3e7ea"/>
<rect x="154" y="109" width="1725" height="1" fill="#e3e7ea"/>
<rect x="114.500" y="160" width="1788.500" height="1" fill="#dfe4e8"/>
<g font-size="13" style="font-size:13px">
<text class="gy" x="155" y="25" textLength="43" lengthAdjust="spacingAndGlyphs">Version</text>
<text class="bl" x="202" y="25" textLength="183" lengthAdjust="spacingAndGlyphs">FR Analyse de marché 2022/01</text>
<text class="gy" x="390" y="25" textLength="50" lengthAdjust="spacingAndGlyphs">· Marché</text>
<text class="bl" x="444" y="25" textLength="16" lengthAdjust="spacingAndGlyphs">VP</text>
<text class="gy" x="464" y="25" textLength="46" lengthAdjust="spacingAndGlyphs">· Niveau</text>
<text class="bl" x="514" y="25" textLength="131" lengthAdjust="spacingAndGlyphs">Communes/ Quartiers</text>
<text class="gy" x="649" y="25" textLength="133" lengthAdjust="spacingAndGlyphs">· Territoire de référence</text>
<text class="bl" x="786" y="25" textLength="94" lengthAdjust="spacingAndGlyphs">Site 45 minutes</text>
<text class="gy" x="884" y="25" textLength="77" lengthAdjust="spacingAndGlyphs">· Découpé par</text>
<text class="bl" x="965" y="25" textLength="132" lengthAdjust="spacingAndGlyphs">Communes/ Quartiers</text>
</g>
<g fill="none" stroke="#98a2b0">
<circle cx="1799" cy="19" r="5.500" stroke-width="2.400"/><circle cx="1799" cy="19" r="7.300" stroke-width="2" stroke-dasharray="2.900 2.840"/>
<circle cx="1835" cy="19" r="7.500" stroke-width="1.600"/>
</g>
<text x="1835" y="23" font-size="11" fill="#98a2b0" text-anchor="middle">?</text>
<ellipse cx="1871" cy="15" rx="4.500" ry="5.500" fill="#98a2b0"/>
<path d="M1863 27.500c0-5 3-7 8-7s8 2 8 7Z" fill="#98a2b0"/>
<text x="154" y="57" font-size="12" fill="#6a747d" textLength="124" lengthAdjust="spacingAndGlyphs">MIS - Immatriculations VN</text>
<path d="M289.500 54.500L294 50L298.500 54.500M310.500 50L315 54.500L319.500 50" fill="none" stroke="#2e9bf0" stroke-width="1.300"/>
<text x="154" y="77" font-size="20" fill="#5fb4f6" textLength="260" lengthAdjust="spacingAndGlyphs">Territoires gagnants et perdants</text>
<rect x="424" y="61" width="69" height="18" rx="9" fill="#00a0ff"/>
<text x="458.500" y="74" font-size="12" fill="#fff" text-anchor="middle" textLength="39" lengthAdjust="spacingAndGlyphs">Modifier</text>
<g fill="#fff" stroke="#8a94a0"><rect x="154.500" y="84.500" width="151" height="18.500" rx="5"/><rect x="316.500" y="84.500" width="151" height="18.500" rx="5"/><rect x="478.500" y="84.500" width="151" height="18.500" rx="5"/></g>
<text x="159" y="98" font-size="12" fill="#58626b" textLength="36" lengthAdjust="spacingAndGlyphs">Renault</text>
<text x="321" y="98" font-size="12" fill="#58626b" textLength="124" lengthAdjust="spacingAndGlyphs">Immatriculations VN par a</text>
<text x="483" y="98" font-size="12" fill="#58626b" textLength="100" lengthAdjust="spacingAndGlyphs">Jan.-Déc. 2018/2017</text>
<path d="M290 92H298L294 96.500ZM452 92H460L456 96.500ZM614 92H622L618 96.500Z" fill="#58626b"/>
<rect x="154.500" y="116.500" width="176" height="30" rx="6" fill="#fff" stroke="#1aa3ff"/>
<path d="M307.500 116.500V146.500" stroke="#1aa3ff"/>
<text x="160" y="136" font-size="12" fill="#1a8fe8" textLength="73" lengthAdjust="spacingAndGlyphs">Ajouter un filtre</text>
<path d="M291 130H299L295 134.500Z" fill="#1a8fe8"/>
<rect x="310.500" y="125.500" width="15" height="14.500" rx="2" fill="#fff" stroke="#a8b8d8"/>
<rect x="310" y="125" width="16" height="3.500" fill="#1a8fe8"/>
<circle cx="325" cy="126" r="2.500" fill="#fff" stroke="#1a8fe8" stroke-width="1.500"/>
<g fill="#0a9bff">
<path d="M1746 124h7v4.500h-7ZM1754.500 124h6.500v4.500h-6.500ZM1762.500 124h6.500v4.500h-6.500ZM1746 132h5v4h-5ZM1752 132h5v4h-5ZM1758 132h5v4h-5ZM1764 132h5v4h-5ZM1746 137.500h5v3h-5ZM1752 137.500h5v3h-5ZM1758 137.500h5v3h-5ZM1764 137.500h5v3h-5ZM1746 141.500h5v3.500h-5ZM1752 141.500h5v3.500h-5ZM1758 141.500h5v3.500h-5ZM1764 141.500h5v3.500h-5Z"/>
<polygon points="1800,125.500 1803.100,132 1810,133.200 1805,138.200 1806.200,145 1800,141.800 1793.800,145 1795,138.200 1790,133.200 1796.900,132" stroke="#0a9bff" stroke-linejoin="round"/>
<circle cx="1876" cy="126" r="2.300"/><circle cx="1876" cy="134" r="2.300"/><circle cx="1876" cy="142" r="2.300"/>
</g>
<path d="M1838.500 140.500H1836.500a2.500 2.500 0 0 1-2.500-2.500V127.500a2.500 2.500 0 0 1 2.500-2.500H1849a2.500 2.500 0 0 1 2.500 2.500V138a2.500 2.500 0 0 1-2.500 2.500H1847M1842.500 131V143.500M1839.500 141L1842.500 144.500L1845.500 141" fill="none" stroke="#0a9bff" stroke-width="1.700"/>

<!-- right panel -->
<rect x="1631" y="161" width="272" height="808" fill="#fff"/>
<path d="M1631 161H1679V203a6 6 0 0 1-6 6H1637a6 6 0 0 1-6-6Z" fill="#00a0ff"/>
<path d="M1643 181H1655M1643 185H1654M1643 189H1659M1645 192.500H1662" stroke="#fff" stroke-width="1.500" fill="none"/>
<circle cx="1660" cy="183" r="6" fill="none" stroke="#fff" stroke-width="2"/>
<path d="M1660 182V186.500M1660 179.500V181" stroke="#fff" stroke-width="1.800"/>
<circle cx="1703" cy="185" r="8" fill="none" stroke="#0a9bff" stroke-width="2"/>
<path d="M1698.500 185H1707.500M1703 180.500V189.500" stroke="#0a9bff" stroke-width="2"/>
<text x="1651" y="234" font-size="12" font-weight="700" fill="#4c5a63" textLength="93" lengthAdjust="spacingAndGlyphs">Site 45 minutes</text>
<g class="row">
<text class="pt" x="1651" y="253" textLength="135" lengthAdjust="spacingAndGlyphs">Marché total Jan.-Déc. 2018</text>
<text class="pt" x="1844" y="253" textLength="33" lengthAdjust="spacingAndGlyphs">21 437</text>
<text class="pt" x="1651" y="275" textLength="111" lengthAdjust="spacingAndGlyphs">Renault Jan.-Déc. 2018</text>
<text class="pt" x="1850" y="275" textLength="27" lengthAdjust="spacingAndGlyphs">4 184</text>
<text class="pt" x="1651" y="297" textLength="107" lengthAdjust="spacingAndGlyphs">% PdM Jan.-Déc. 2018</text>
<text class="pt" x="1851" y="297" textLength="26" lengthAdjust="spacingAndGlyphs">19,52</text>
<text class="pt" x="1651" y="319" textLength="164" lengthAdjust="spacingAndGlyphs">% Ecart PdM Jan.-Déc. 2018/2017</text>
<text class="pt" x="1853" y="319" textLength="24" lengthAdjust="spacingAndGlyphs">-8,80</text>
</g>
<rect x="1651" y="331" width="226" height="1" fill="#e3e7ea"/>
<text class="ph" x="1651" y="358" textLength="71" lengthAdjust="spacingAndGlyphs">Coloration</text>
<g fill="none" stroke="#0a9bff"><circle cx="1734.500" cy="352.500" r="4.300" stroke-width="2"/><circle cx="1734.500" cy="352.500" r="5.800" stroke-width="1.600" stroke-dasharray="2.280 2.280"/></g>
<text class="pl" x="1651" y="381" textLength="112" lengthAdjust="spacingAndGlyphs">Portfolio des zones</text>
<g fill="#fff" stroke="#6b7780"><rect x="1655.500" y="399.500" width="12" height="12" rx="2"/><rect x="1655.500" y="465.500" width="12" height="12" rx="2"/><rect x="1655.500" y="531.500" width="12" height="12" rx="2"/><rect x="1655.500" y="597.500" width="12" height="12" rx="2"/><rect x="1655.500" y="663.500" width="12" height="12" rx="2"/></g>
<g stroke="#5f6f78"><rect x="1678.500" y="392.500" width="22" height="22" rx="4" fill="#b5e59a"/><rect x="1678.500" y="458.500" width="22" height="22" rx="4" fill="#fdfb96"/><rect x="1678.500" y="524.500" width="22" height="22" rx="4" fill="#fdc79a"/><rect x="1678.500" y="590.500" width="22" height="22" rx="4" fill="#f48d8e"/><rect x="1678.500" y="656.500" width="22" height="22" rx="4" fill="#fff"/></g>
<text class="pl" x="1709" y="407" textLength="98" lengthAdjust="spacingAndGlyphs">% PdM Jan.-Déc.</text>
<text class="pl" x="1709" y="428.500" textLength="68" lengthAdjust="spacingAndGlyphs">2018&gt;19,52</text>
<text class="pl" x="1709" y="450.500" textLength="95" lengthAdjust="spacingAndGlyphs">% Ecart PdM&gt;=0</text>
<text class="pl" x="1709" y="473" textLength="98" lengthAdjust="spacingAndGlyphs">% PdM Jan.-Déc.</text>
<text class="pl" x="1709" y="494.500" textLength="68" lengthAdjust="spacingAndGlyphs">2018&gt;19,52</text>
<text class="pl" x="1709" y="516.500" textLength="88" lengthAdjust="spacingAndGlyphs">% Ecart PdM&lt;0</text>
<text class="pl" x="1709" y="539" textLength="98" lengthAdjust="spacingAndGlyphs">% PdM Jan.-Déc.</text>
<text class="pl" x="1709" y="560.500" textLength="76" lengthAdjust="spacingAndGlyphs">2018&lt;=19,52</text>
<text class="pl" x="1709" y="582.500" textLength="95" lengthAdjust="spacingAndGlyphs">% Ecart PdM&gt;=0</text>
<text class="pl" x="1709" y="604.500" textLength="98" lengthAdjust="spacingAndGlyphs">% PdM Jan.-Déc.</text>
<text class="pl" x="1709" y="626.500" textLength="76" lengthAdjust="spacingAndGlyphs">2018&lt;=19,52</text>
<text class="pl" x="1709" y="648.500" textLength="88" lengthAdjust="spacingAndGlyphs">% Ecart PdM&lt;0</text>
<text class="pl" x="1709" y="674.500" textLength="42" lengthAdjust="spacingAndGlyphs">aucune</text>
<rect x="1651" y="690" width="226" height="1" fill="#e3e7ea"/>
<text class="ph" x="1651" y="717" textLength="191" lengthAdjust="spacingAndGlyphs">Mes créations de territoires</text>
<path d="M1849.500 712c4-6.500 13-6.500 17 0c-4 6.500-13 6.500-17 0Z" fill="#0a9bff"/><circle cx="1858" cy="712" r="3" fill="#fff"/><circle cx="1858" cy="712" r="1.500" fill="#0a9bff"/>
<g fill="#0a9bff"><circle cx="1872" cy="732" r="1.700"/><circle cx="1872" cy="737" r="1.700"/><circle cx="1872" cy="742" r="1.700"/></g>
<text class="pt" x="1766" y="767" textLength="59" lengthAdjust="spacingAndGlyphs">Marché total</text>
<text class="pt" x="1781" y="782" textLength="44" lengthAdjust="spacingAndGlyphs">Jan.-Déc.</text>
<text class="pt" x="1802" y="797" textLength="23" lengthAdjust="spacingAndGlyphs">2018</text>
<text class="pt" x="1841" y="767" textLength="36" lengthAdjust="spacingAndGlyphs">Renault</text>
<text class="pt" x="1832" y="782" textLength="45" lengthAdjust="spacingAndGlyphs">Jan.-Déc.</text>
<text class="pt" x="1853" y="797" textLength="24" lengthAdjust="spacingAndGlyphs">2018</text>
<rect x="1651" y="809" width="20" height="8" rx="4" fill="#c87b28"/>
<text class="pt" x="1678" y="818" textLength="74" lengthAdjust="spacingAndGlyphs">Site 45 minutes</text>
<text class="pt" x="1793" y="818" textLength="32" lengthAdjust="spacingAndGlyphs">21 437</text>
<text class="pt" x="1850" y="818" textLength="27" lengthAdjust="spacingAndGlyphs">4 184</text>
<text x="1658" y="841.500" font-size="13" fill="#0a9bff" textLength="236" lengthAdjust="spacingAndGlyphs">Abandonner mes créations de territoires</text>
<rect x="1651" y="860" width="226" height="1" fill="#e3e7ea"/>
<text class="ph" x="1651" y="886" textLength="52" lengthAdjust="spacingAndGlyphs">Libellés</text>
<text class="pl" x="1651" y="913" textLength="98" lengthAdjust="spacingAndGlyphs">Nom du territoire</text>
<text class="pl" x="1651" y="938.500" textLength="163" lengthAdjust="spacingAndGlyphs">Marché total Jan.-Déc. 2018</text>
<text class="pl" x="1651" y="964.500" textLength="134" lengthAdjust="spacingAndGlyphs">Renault Jan.-Déc. 2018</text>
<g fill="#b0bbc9"><rect x="1831" y="898" width="40" height="24" rx="12"/><rect x="1831" y="924" width="40" height="24" rx="12"/><rect x="1831" y="949" width="40" height="24" rx="12"/></g>
<g fill="#fff"><circle cx="1843" cy="910" r="10"/><circle cx="1843" cy="936" r="10"/><circle cx="1843" cy="961" r="10"/></g>

<!-- bottom bar -->
<rect y="969" width="1903" height="2" fill="#000"/>
<rect x="145" y="969" width="49" height="2" fill="#3a3a3a"/>
<rect x="292" y="969" width="49" height="2" fill="#b5621e"/>
</svg>
</body></html>
